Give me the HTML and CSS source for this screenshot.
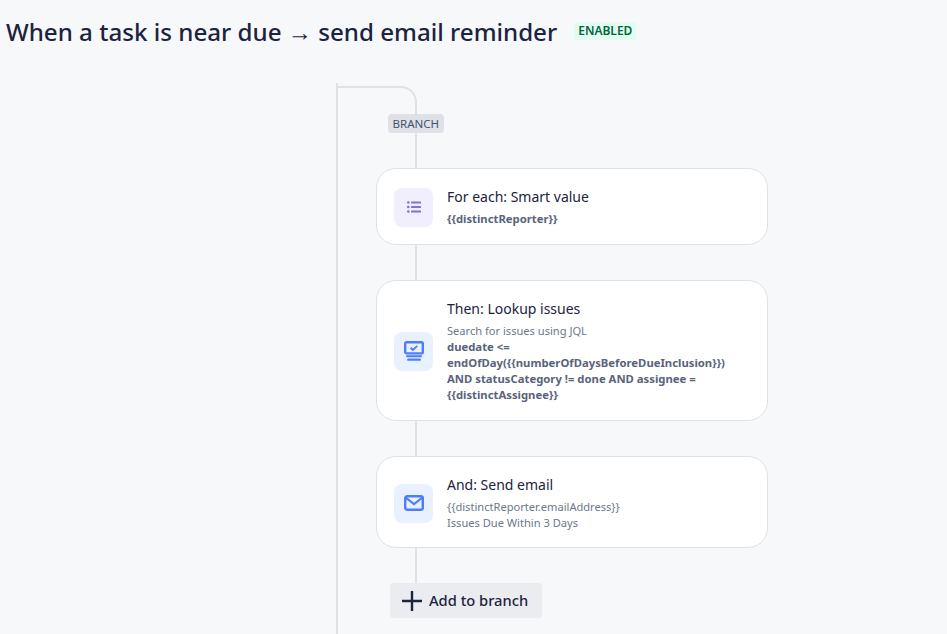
FILE: index.html
```html
<!DOCTYPE html>
<html lang="en">
<head>
<meta charset="utf-8">
<title>Rule</title>
<link rel="stylesheet" href="styles.css">
</head>
<body>
<header class="header">
  <h1 class="title">When a task is near due → send email reminder</h1>
  <span class="lozenge">ENABLED</span>
</header>
<main class="canvas">
  <div class="branch">
    <div class="rail"></div>
    <div class="elbow"></div>
    <div class="stem"></div>
    <span class="branch-tag">BRANCH</span>
    <section class="card">
      <div class="icon icon-purple">
        <svg width="14" height="12" viewBox="0 0 14 12"><g fill="#8270db"><circle cx="1.3" cy="1.5" r="1.3"/><circle cx="1.3" cy="6" r="1.3"/><circle cx="1.3" cy="10.5" r="1.3"/><rect x="4" y="0.5" width="10" height="2" rx=".5"/><rect x="4" y="5" width="10" height="2" rx=".5"/><rect x="4" y="9.5" width="10" height="2" rx=".5"/></g></svg>
      </div>
      <div class="body">
        <div class="card-title">For each: Smart value</div>
        <div class="meta"><b>{{distinctReporter}}</b></div>
      </div>
    </section>
    <section class="card">
      <div class="icon icon-blue">
        <svg width="20" height="20" viewBox="0 0 20 20"><rect x="1.2" y="1.2" width="17.6" height="11.2" rx="1.4" fill="none" stroke="#4c7dfb" stroke-width="2.4"/><path d="M6.6 6.7l2.3 2.2 4.3-4" fill="none" stroke="#4c7dfb" stroke-width="1.9"/><rect x="2.2" y="14.2" width="15.6" height="2" fill="#4c7dfb"/><rect x="3.2" y="17.6" width="13.6" height="2.2" rx=".9" fill="#4c7dfb"/></svg>
      </div>
      <div class="body">
        <div class="card-title">Then: Lookup issues</div>
        <div class="meta">Search for issues using JQL<br><b>duedate &lt;= endOfDay({{numberOfDaysBeforeDueInclusion}}) AND statusCategory != done AND assignee = {{distinctAssignee}}</b></div>
      </div>
    </section>
    <section class="card card-last">
      <div class="icon icon-blue">
        <svg width="20" height="16" viewBox="0 0 20 16"><rect x="1.2" y="1.2" width="17.6" height="13.6" rx="2" fill="none" stroke="#4c7dfb" stroke-width="2.4"/><path d="M1.5 2.5L10 9.2l8.5-6.7" fill="none" stroke="#4c7dfb" stroke-width="2.2"/></svg>
      </div>
      <div class="body">
        <div class="card-title">And: Send email</div>
        <div class="meta">{{distinctReporter.emailAddress}}<br>Issues Due Within 3 Days</div>
      </div>
    </section>
    <button class="add" type="button">
      <svg width="20" height="20" viewBox="0 0 20 20"><path d="M10 0v20M0 10h20" stroke="#1c2340" stroke-width="2.4"/></svg>
      <span class="add-label">Add to branch</span>
    </button>
  </div>
</main>
</body>
</html>
```
FILE: styles.css
```css
* { box-sizing: border-box; }
html, body { height: 100%; }
body {
  margin: 0;
  height: 634px;
  overflow: hidden;
  background: #f7f8fa;
  color: #1c2340;
  font-family: "Noto Sans", "Open Sans", sans-serif;
}
.header {
  display: flex;
  align-items: flex-start;
  gap: 17px;
  padding: 14px 0 0 6px;
  height: 83px;
}
.title {
  margin: 0;
  font-size: 24.15px;
  line-height: 36px;
  font-weight: 500;
  color: #1c2340;
}
.lozenge {
  margin-top: 8px;
  padding: 0 4px;
  height: 18px;
  line-height: 18px;
  border-radius: 3px;
  background: #e3fcef;
  color: #006644;
  font-size: 12px;
  font-weight: 600;
}
.canvas { padding-left: 336px; }
.branch {
  position: relative;
  width: 432px;
  height: 551px;
  padding: 31px 0 0 40px;
  display: flex;
  flex-direction: column;
  align-items: flex-start;
}
.rail {
  position: absolute;
  left: 0; top: 0; bottom: 0;
  width: 2px;
  background: #dfe1e6;
}
.elbow {
  position: absolute;
  left: 2px; top: 3px;
  width: 79px;
  height: 30px;
  border-top: 2px solid #dfe1e6;
  border-right: 2px solid #dfe1e6;
  border-top-right-radius: 16px;
}
.stem {
  position: absolute;
  left: 79px; top: 30px;
  width: 2px;
  height: 470px;
  background: #dfe1e6;
}
.branch-tag {
  position: relative;
  margin-left: 12px;
  padding: 0 4.5px;
  height: 19px;
  line-height: 19px;
  border-radius: 4px;
  background: #dfe1e6;
  color: #42526e;
  font-size: 11.5px;
}
.card {
  position: relative;
  display: flex;
  align-items: center;
  width: 392px;
  margin-bottom: 35px;
  padding: 18px 16px 17px 17px;
  background: #fff;
  border: 1px solid #dfe1e6;
  border-radius: 20px;
}
.card-last { padding-bottom: 16px; }
.branch-tag + .card { margin-top: 35px; }
.icon {
  flex: none;
  display: flex;
  align-items: center;
  justify-content: center;
  width: 39px;
  height: 39px;
  margin-right: 14px;
  border-radius: 8px;
}
.icon-purple { background: #f1eefe; }
.icon-blue { background: #e9f1ff; }
.body { width: 290px; }
.card-title {
  font-size: 14px;
  line-height: 20px;
  color: #1c2340;
}
.meta {
  margin-top: 4px;
  font-size: 11.1px;
  line-height: 16px;
  color: #6b778c;
}
.meta b { font-size: 11.3px; font-weight: 700; color: #59637a; }
.add {
  position: relative;
  display: flex;
  align-items: center;
  gap: 7px;
  margin: 0 0 0 14px;
  padding: 0 14px 0 12px;
  height: 35px;
  border: 0;
  border-radius: 3px;
  background: #ebecf0;
  color: #1c2340;
  font: 500 14.7px "Noto Sans", "Open Sans", sans-serif;
}
.add-label { margin-top: -2px; }
```
